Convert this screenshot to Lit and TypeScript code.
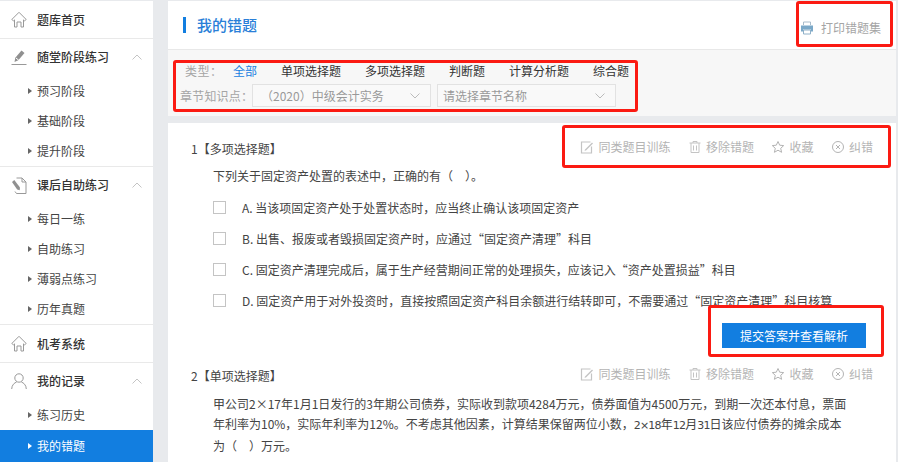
import { LitElement, html, css, svg } from "lit";
import { customElement } from "lit/decorators.js";

const icons: Record<string, any> = {
  home: svg`<path d="M.8 9.500 8 2.300l7.200 7.200-1.700 1.300-1-.9V17H10v-5H6v5H3.500V9.900l-1 .9z" fill="none" stroke="#999" stroke-width="1"/>`,
  pen: svg`<path d="M3.500 14 4.300 9.800 10.500 2.500l3 2.500-6.200 7.300z" fill="#909090"/><path d="M5 10l2.800 2.300" stroke="#fff" fill="none"/><path d="M.5 16.500h15" stroke="#999" stroke-width="1"/>`,
  doc: svg`<path d="M5.500 2H11l4 4v11.500H5.500L4 15.500" fill="none" stroke="#999"/><path d="M11 2v4h4" fill="none" stroke="#999"/><path d="M1 6 3.300 4 9 11.500l-.3 2.800-2.500-.8z" fill="#909090"/>`,
  user: svg`<circle cx="8" cy="6" r="4.200" fill="none" stroke="#999"/><path d="M.7 17c0-4 3-6.500 4.800-6.800M15.300 17c0-4-3-6.500-4.800-6.800" fill="none" stroke="#999"/>`,
};
const aIcons: Record<string, any> = {
  edit: svg`<path d="M10.500 2H1.500v11h10V6.500" fill="none" stroke="#c4c4c4" stroke-width="1.200"/><path d="M5 9.500 12 2.500l1 1-7 7-1.500.3z" fill="#c4c4c4"/>`,
  trash: svg`<path d="M1.500 3h11M5 3V1.500h4V3M3 3v9.500h8V3M5.500 5.500v5M8.500 5.500v5" fill="none" stroke="#c4c4c4"/>`,
  star: svg`<path d="M7 1.500 8.700 5.200l4 .4-3 2.700.9 4-3.600-2.100-3.600 2.100.9-4-3-2.700 4-.4z" fill="none" stroke="#b4b4b4"/>`,
  wrong: svg`<circle cx="7" cy="7" r="5.500" fill="none" stroke="#b4b4b4"/><path d="M5 5l4 4M9 5l-4 4" fill="none" stroke="#b4b4b4"/>`,
};

@customElement("app-root")
export class AppRoot extends LitElement {
  static styles = css`
    :host { display: block; width: 898px; height: 462px; overflow: hidden; position: relative; background: #e8eaed;
      font: 12px/20px "Noto Sans CJK SC", "Noto Sans", sans-serif; color: #444; }
    .page { display: flex; height: 462px; padding-top: 1px; box-sizing: border-box; }
    .side { width: 153px; flex: none; background: #fff; margin-right: 15px; }
    .head { height: 37px; display: flex; align-items: center; padding-left: 11px; color: #333; font-weight: 500; border-bottom: 1px solid #e9e9e9; }
    .head svg.i { width: 16px; height: 19px; margin-right: 10px; flex: none; }
    .head .up { width: 10px; height: 6px; margin-left: auto; margin-right: 11px; }
    .group .head { border: 0; height: 36px; }
    .group { border-bottom: 1px solid #e9e9e9; }
    .group:last-child { border: 0; }
    .subs { padding-top: 1px; }
    .sub { height: 30px; display: flex; align-items: center; padding-left: 28px; color: #444; }
    .sub::before { content: ""; border-left: 4px solid #666; border-top: 3px solid transparent; border-bottom: 3px solid transparent; margin-right: 5px; }
    .sub.on { background: #127ee0; color: #fff; height: 32px; }
    .sub.on::before { border-left-color: #fff; }

    .main { width: 728px; flex: none; display: flex; flex-direction: column; }
    .top { height: 48px; background: #fff; border-bottom: 1px solid #e8e8e8; display: flex; align-items: center; padding: 0 15px; }
    .title { border-left: 3px solid #127ee0; height: 16px; line-height: 16px; padding-left: 11px; font-size: 15px; font-weight: 500; color: #2a7fd8; }
    .print { margin-left: auto; display: flex; align-items: center; gap: 7px; color: #a5a5a5; margin-top: 6px; }
    .print svg { width: 14px; height: 14px; }
    .filter { height: 66px; background: #f7f7f7; padding: 10px 0 0 12px; box-sizing: border-box; margin-bottom: 7px; }
    .types { display: flex; height: 22px; align-items: center; color: #333; padding-left: 5px; gap: 24px; }
    .types .lab { color: #a5a5a5; width: 24px; white-space: nowrap; letter-spacing: .5px; }
    .types .cur { color: #1a7fe0; }
    .sel-row { display: flex; align-items: center; margin-top: 2px; color: #a5a5a5; }
    .sel-row .lab { width: 72px; white-space: nowrap; letter-spacing: .2px; }
    .sel { width: 179px; height: 23px; border: 1px solid #e2e2e2; box-sizing: border-box; background: #f9f9f9; display: flex; align-items: center; margin-right: 6px; color: #999; padding-left: 5px; }
    .sel.first { padding-left: 8px; }
    .sel svg { width: 10px; height: 6px; margin-left: auto; margin-right: 10px; }
    .card { flex: 1; background: #fff; min-height: 0; overflow: hidden; }
    .qh { display: flex; align-items: center; height: 20px; padding: 0 23px; color: #444; }
    .actions { margin-left: auto; display: flex; color: #b4b4b4; gap: 17.5px; margin-top: -4px; }
    .actions span { display: flex; align-items: center; gap: 4px; }
    .actions svg { width: 14px; height: 14px; }
    .q1 { padding-top: 16px; height: 227px; }
    .stem { padding-left: 45px; margin-top: 7px; color: #444; }
    .opt { display: flex; align-items: center; height: 31px; padding-left: 45px; color: #444; }
    .opt i { width: 11px; height: 11px; border: 1px solid #c4c4c4; margin-right: 16px; flex: none; }
    .opts { margin-top: 6px; }
    .btnrow { display: flex; justify-content: flex-end; padding-right: 30px; margin-top: 7px; }
    button { width: 144px; height: 25px; border: 0; background: #127ee0; color: #fff; font: inherit; padding: 0; }
    .q2 .stem { margin-top: 8px; padding-right: 49px; }
    .alt { font-family: "DejaVu Sans", "Noto Sans CJK SC", sans-serif; font-size: 11px; letter-spacing: -.8px; }
    .red { position: absolute; border: 3px solid #fb1a12; border-radius: 3px; box-sizing: border-box; pointer-events: none; }
    .r1 { left: 173px; top: 60px; width: 465px; height: 52px; }
    .r2 { left: 796px; top: 1px; width: 97px; height: 46px; }
    .r3 { left: 562px; top: 125px; width: 329px; height: 43px; }
    .r4 { left: 708px; top: 305px; width: 176px; height: 52px; }
  `;

  head(ic: string, t: string, up = false) {
    return html`<div class="head"><svg class="i" viewBox="0 0 16 19">${icons[ic]}</svg>${t}${up
      ? html`<svg class="up" viewBox="0 0 10 6"><path d="M.5 5.500 5 1l4.500 4.500" fill="none" stroke="#c4c4c4"/></svg>` : ""}</div>`;
  }
  group(ic: string, t: string, subs: string[], active = "") {
    return html`<div class="group">${this.head(ic, t, true)}<div class="subs">
      ${subs.map((s) => html`<div class="sub ${s === active ? "on" : ""}">${s}</div>`)}</div></div>`;
  }
  acts() {
    return html`<div class="actions">
      <span><svg viewBox="0 0 14 14">${aIcons.edit}</svg>同类题目训练</span>
      <span><svg viewBox="0 0 14 14">${aIcons.trash}</svg>移除错题</span>
      <span><svg viewBox="0 0 14 14">${aIcons.star}</svg>收藏</span>
      <span><svg viewBox="0 0 14 14">${aIcons.wrong}</svg>纠错</span></div>`;
  }
  caret() {
    return html`<svg viewBox="0 0 10 6"><path d="M.5 .5 5 5l4.500-4.500" fill="none" stroke="#bbb"/></svg>`;
  }

  render() {
    const opts = [
      "A. 当该项固定资产处于处置状态时，应当终止确认该项固定资产",
      "B. 出售、报废或者毁损固定资产时，应通过“固定资产清理”科目",
      "C. 固定资产清理完成后，属于生产经营期间正常的处理损失，应该记入“资产处置损益”科目",
      "D. 固定资产用于对外投资时，直接按照固定资产科目余额进行结转即可，不需要通过“固定资产清理”科目核算",
    ];
    return html`<div class="page">
      <nav class="side">
        ${this.head("home", "题库首页")}
        ${this.group("pen", "随堂阶段练习", ["预习阶段", "基础阶段", "提升阶段"])}
        ${this.group("doc", "课后自助练习", ["每日一练", "自助练习", "薄弱点练习", "历年真题"])}
        ${this.head("home", "机考系统")}
        ${this.group("user", "我的记录", ["练习历史", "我的错题"], "我的错题")}
      </nav>
      <main class="main">
        <div class="top"><div class="title">我的错题</div>
          <div class="print"><svg viewBox="0 0 14 14"><path d="M3.500 4V1h7v3" fill="none" stroke="#a9bccb"/><path d="M1 4.500h12v6h-2V8.500H3v2H1z" fill="#7aa8c8"/><path d="M3.500 9h7v4h-7z" fill="#fff" stroke="#8fb0c8"/></svg>打印错题集</div></div>
        <div class="filter">
          <div class="types"><span class="lab">类型：</span><span class="cur">全部</span><span>单项选择题</span><span>多项选择题</span><span>判断题</span><span>计算分析题</span><span>综合题</span></div>
          <div class="sel-row"><span class="lab">章节知识点：</span>
            <div class="sel first">（2020）中级会计实务${this.caret()}</div>
            <div class="sel">请选择章节名称${this.caret()}</div></div>
        </div>
        <div class="card">
          <section class="q1">
            <div class="qh"><span>1【多项选择题】</span>${this.acts()}</div>
            <div class="stem">下列关于固定资产处置的表述中，正确的有（&emsp;）。</div>
            <div class="opts">${opts.map((o) => html`<div class="opt"><i></i>${o}</div>`)}</div>
            <div class="btnrow"><button>提交答案并查看解析</button></div>
          </section>
          <section class="q2">
            <div class="qh"><span>2【单项选择题】</span>${this.acts()}</div>
            <div class="stem">甲公司2×17年1月1日发行的3年期公司债券，实际收到款项4284万元，债券面值为4500万元，到期一次还本付息，票面年利率为10%，实际年利率为12%。不考虑其他因素，计算结果保留两位小数，<span class="alt">2×18</span>年<span class="alt">12</span>月<span class="alt">31</span>日该应付债券的摊余成本为（&emsp;）万元。</div>
          </section>
        </div>
      </main>
    </div>
    <div class="red r1"></div><div class="red r2"></div><div class="red r3"></div><div class="red r4"></div>`;
  }
}
